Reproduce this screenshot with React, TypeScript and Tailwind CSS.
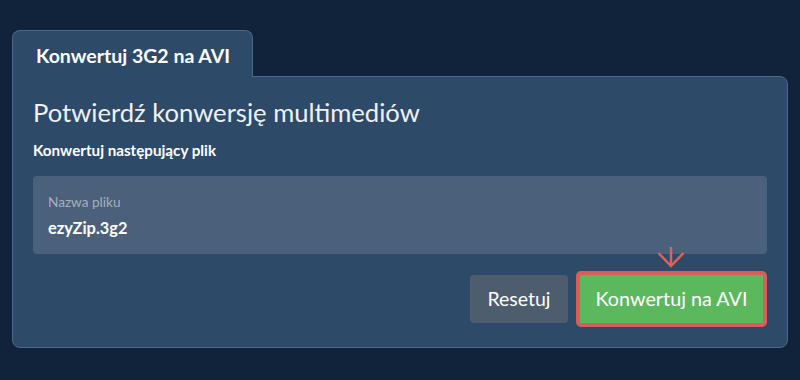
import React from "react";

export default function App() {
  return (
    <div
      className="w-[800px] h-[380px] bg-[#11233a] pt-[30px] px-[12px]"
      style={{ fontFamily: "Lato, 'Noto Sans', sans-serif" }}
    >
      <div className="relative z-10 -mb-px flex h-[47px] w-[241px] items-center rounded-t-[8px] border border-b-0 border-[#4d6788] bg-[#2d4a69] pl-[23px] pt-[3px]">
        <span className="text-[19.5px] font-bold text-white">Konwertuj 3G2 na AVI</span>
      </div>
      <div className="rounded-b-[8px] rounded-tr-[8px] border border-[#4d6788] bg-[#2d4a69] px-[20px] pt-[19px] pb-[20px]">
        <h1 className="text-[25.6px] leading-[32px] text-[#eef1f5]">Potwierdź konwersję multimediów</h1>
        <p className="mt-[12px] text-[15.2px] leading-[20px] font-bold text-white">Konwertuj następujący plik</p>
        <div className="mt-[16px] h-[78px] rounded-[4px] bg-[#4b607a] px-[15px] pt-[17px]">
          <div className="text-[13.6px] leading-[18px] text-[#a3b0c0]">Nazwa pliku</div>
          <div className="mt-[6px] text-[16.4px] leading-[22px] font-bold text-white">ezyZip.3g2</div>
        </div>
        <div className="mt-[17px] flex items-center justify-end gap-[8px]">
          <button className="h-[48px] w-[98px] rounded-[4px] bg-[#4e5d6e] text-[19.5px] text-white">Resetuj</button>
          <div className="relative">
            <svg
              className="absolute left-[81px] top-[-24px]"
              width="28"
              height="22"
              viewBox="0 0 28 22"
              fill="none"
              stroke="#e0605a"
              strokeWidth="2.5"
            >
              <line x1="14" y1="0" x2="14" y2="19" />
              <polyline points="1.5,6 14,19 26.5,6" />
            </svg>
            <button className="h-[56px] w-[191px] rounded-[5px] border-[4px] border-[#dc5d58] bg-[#5cb85c] text-[19.8px] text-white">
              Konwertuj na AVI
            </button>
          </div>
        </div>
      </div>
    </div>
  );
}
